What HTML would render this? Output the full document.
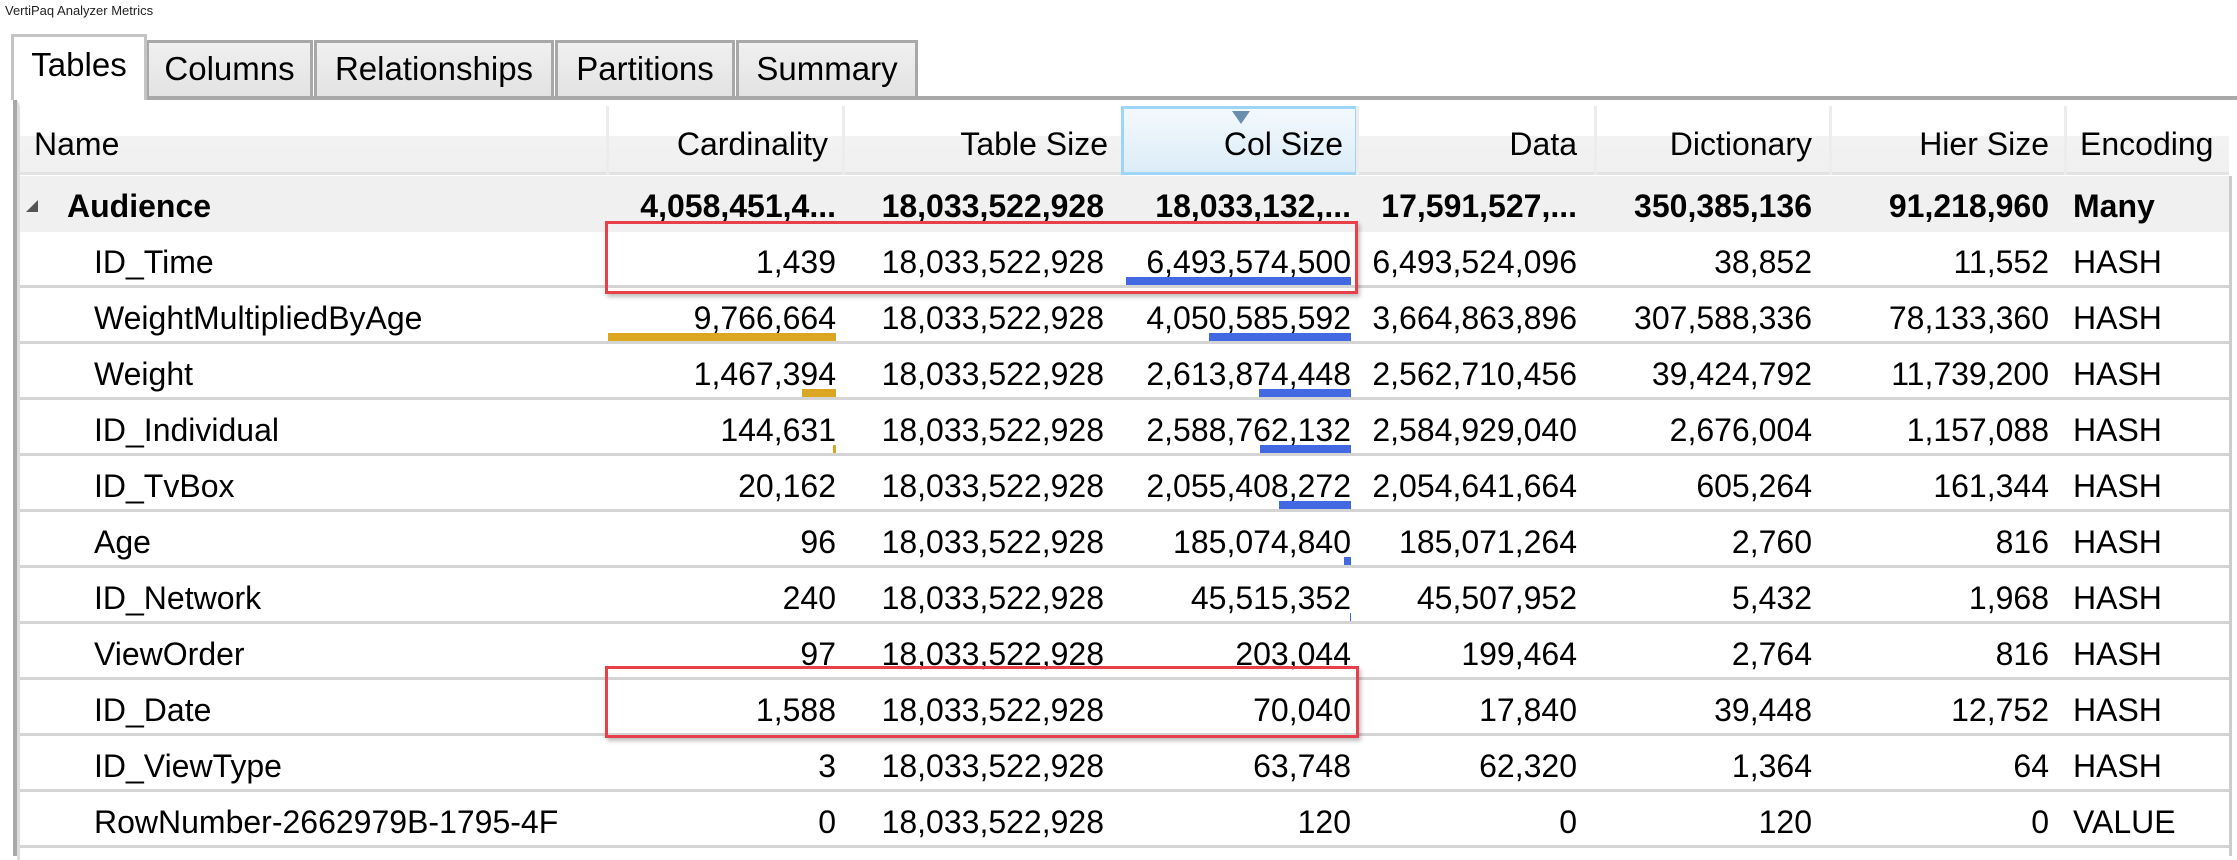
<!DOCTYPE html>
<html><head><meta charset="utf-8"><style>
*{margin:0;padding:0;box-sizing:border-box}
body{width:2237px;height:847px;overflow:hidden;background:#fff;font-family:"Liberation Sans",sans-serif;color:#000;position:relative}
.a{position:absolute;white-space:nowrap}
.title{left:5px;top:3px;font-size:13px;color:#222}
.tab{position:absolute;top:40px;height:58px;border:3px solid #a8a8a8;border-bottom:none;background:linear-gradient(#f0f0f0,#e2e2e2);font-size:33px;text-align:center;line-height:52px}
.tab.sel{top:34px;height:66px;background:#fff;border-color:#c4c4c4;z-index:3;line-height:56px}
.frame{position:absolute;left:13px;top:96px;width:2240px;height:760px;border:4px solid #a8a8a8;border-right:none;border-bottom:none}
.inner{position:absolute;left:17px;top:100px;width:2240px;height:760px;border-left:3px solid #ddd;border-top:6px solid #fff}
.hdr{position:absolute;top:106px;height:69px;background:linear-gradient(#fff 0%,#fff 45%,#f2f2f2 46%,#f0f0f0 100%);border-bottom:3px solid #e2e2e2}
.hc{position:absolute;top:106px;height:69px;border-left:3px solid #ececec;font-size:32px;line-height:77px}
.row{position:absolute;left:20px;width:2209px;height:56px;border-bottom:3px solid #d4d4d4}
.t{position:absolute;font-size:32px;line-height:60px;white-space:nowrap}
.r{text-align:right}
.bar{position:absolute;height:8px}
.box{position:absolute;border:3px solid #e8404a;box-shadow:2px 3px 4px rgba(0,0,0,.25)}
</style></head><body>
<div class="a title">VertiPaq Analyzer Metrics</div>
<div class="tab sel" style="left:11px;width:136px">Tables</div>
<div class="tab" style="left:146px;width:167px">Columns</div>
<div class="tab" style="left:314px;width:240px">Relationships</div>
<div class="tab" style="left:555px;width:180px">Partitions</div>
<div class="tab" style="left:736px;width:182px">Summary</div>
<div class="frame"></div>
<div class="inner"></div>
<div class="hdr" style="left:20px;width:2209px"></div>
<div class="hc" style="left:20px;width:586px;border-left:none"><span style="position:absolute;left:14px">Name</span></div>
<div class="hc" style="left:606px;width:236px"><span style="position:absolute;right:14px">Cardinality</span></div>
<div class="hc" style="left:842px;width:281px"><span style="position:absolute;right:15px">Table Size</span></div>
<div class="hc" style="left:1121px;width:237px;border:3px solid #9dd5f7;background:linear-gradient(#f3f9fd,#dcecf7)"><span style="position:absolute;right:12px;top:-3px">Col Size</span><div style="position:absolute;left:108px;top:2px;width:0;height:0;border-left:9px solid transparent;border-right:9px solid transparent;border-top:13px solid #6a8eb0"></div></div>
<div class="hc" style="left:1356px;width:238px"><span style="position:absolute;right:17px">Data</span></div>
<div class="hc" style="left:1594px;width:235px"><span style="position:absolute;right:17px">Dictionary</span></div>
<div class="hc" style="left:1829px;width:235px"><span style="position:absolute;right:15px">Hier Size</span></div>
<div class="hc" style="left:2064px;width:165px"><span style="position:absolute;left:13px">Encoding</span></div>

<div class="row" style="top:176px;background:#f0f0f0;border-bottom:none;font-weight:bold">
<div style="position:absolute;left:6px;top:24px;width:0;height:0;border-left:12px solid transparent;border-bottom:12px solid #555"></div>
<div class="t" style="left:47px;font-weight:bold">Audience</div>
<div class="t r" style="right:1393px;font-weight:bold">4,058,451,4...</div>
<div class="t r" style="right:1125px;font-weight:bold">18,033,522,928</div>
<div class="t r" style="right:878px;font-weight:bold">18,033,132,...</div>
<div class="t r" style="right:652px;font-weight:bold">17,591,527,...</div>
<div class="t r" style="right:417px;font-weight:bold">350,385,136</div>
<div class="t r" style="right:180px;font-weight:bold">91,218,960</div>
<div class="t" style="left:2053px;font-weight:bold">Many</div>
</div>
<div style="position:absolute;left:2229px;top:176px;width:8px;height:680px;border-left:3px solid #ccc"></div>

<div id="rows"></div>
<script>
var d=[
["ID_Time","1,439","18,033,522,928","6,493,574,500","6,493,524,096","38,852","11,552","HASH",0,1126],
["WeightMultipliedByAge","9,766,664","18,033,522,928","4,050,585,592","3,664,863,896","307,588,336","78,133,360","HASH",608,1209],
["Weight","1,467,394","18,033,522,928","2,613,874,448","2,562,710,456","39,424,792","11,739,200","HASH",802,1259],
["ID_Individual","144,631","18,033,522,928","2,588,762,132","2,584,929,040","2,676,004","1,157,088","HASH",833,1260],
["ID_TvBox","20,162","18,033,522,928","2,055,408,272","2,054,641,664","605,264","161,344","HASH",0,1279],
["Age","96","18,033,522,928","185,074,840","185,071,264","2,760","816","HASH",0,1344],
["ID_Network","240","18,033,522,928","45,515,352","45,507,952","5,432","1,968","HASH",0,1350],
["ViewOrder","97","18,033,522,928","203,044","199,464","2,764","816","HASH",0,0],
["ID_Date","1,588","18,033,522,928","70,040","17,840","39,448","12,752","HASH",0,0],
["ID_ViewType","3","18,033,522,928","63,748","62,320","1,364","64","HASH",0,0],
["RowNumber-2662979B-1795-4F","0","18,033,522,928","120","0","120","0","VALUE",0,0]];
var h="";
d.forEach(function(r,i){var top=232+i*56;
h+='<div class="row" style="top:'+top+'px">';
h+='<div class="t" style="left:74px;width:506px;overflow:hidden">'+r[0]+'</div>';
var rs=[1393,1125,878,652,417,180];
for(var k=0;k<6;k++)h+='<div class="t r" style="right:'+rs[k]+'px">'+r[k+1]+'</div>';
h+='<div class="t" style="left:2053px">'+r[7]+'</div>';
if(r[8])h+='<div class="bar" style="background:#dba723;left:'+(r[8]-20)+'px;width:'+(836-r[8])+'px;bottom:0"></div>';
if(r[9])h+='<div class="bar" style="background:#4169e1;left:'+(r[9]-20)+'px;width:'+(1351-r[9])+'px;bottom:0"></div>';
h+='</div>';});
document.getElementById("rows").innerHTML=h;
</script>
<div class="box" style="left:605px;top:221px;width:753px;height:73px"></div>
<div class="box" style="left:605px;top:666px;width:754px;height:72px"></div>
</body></html>
